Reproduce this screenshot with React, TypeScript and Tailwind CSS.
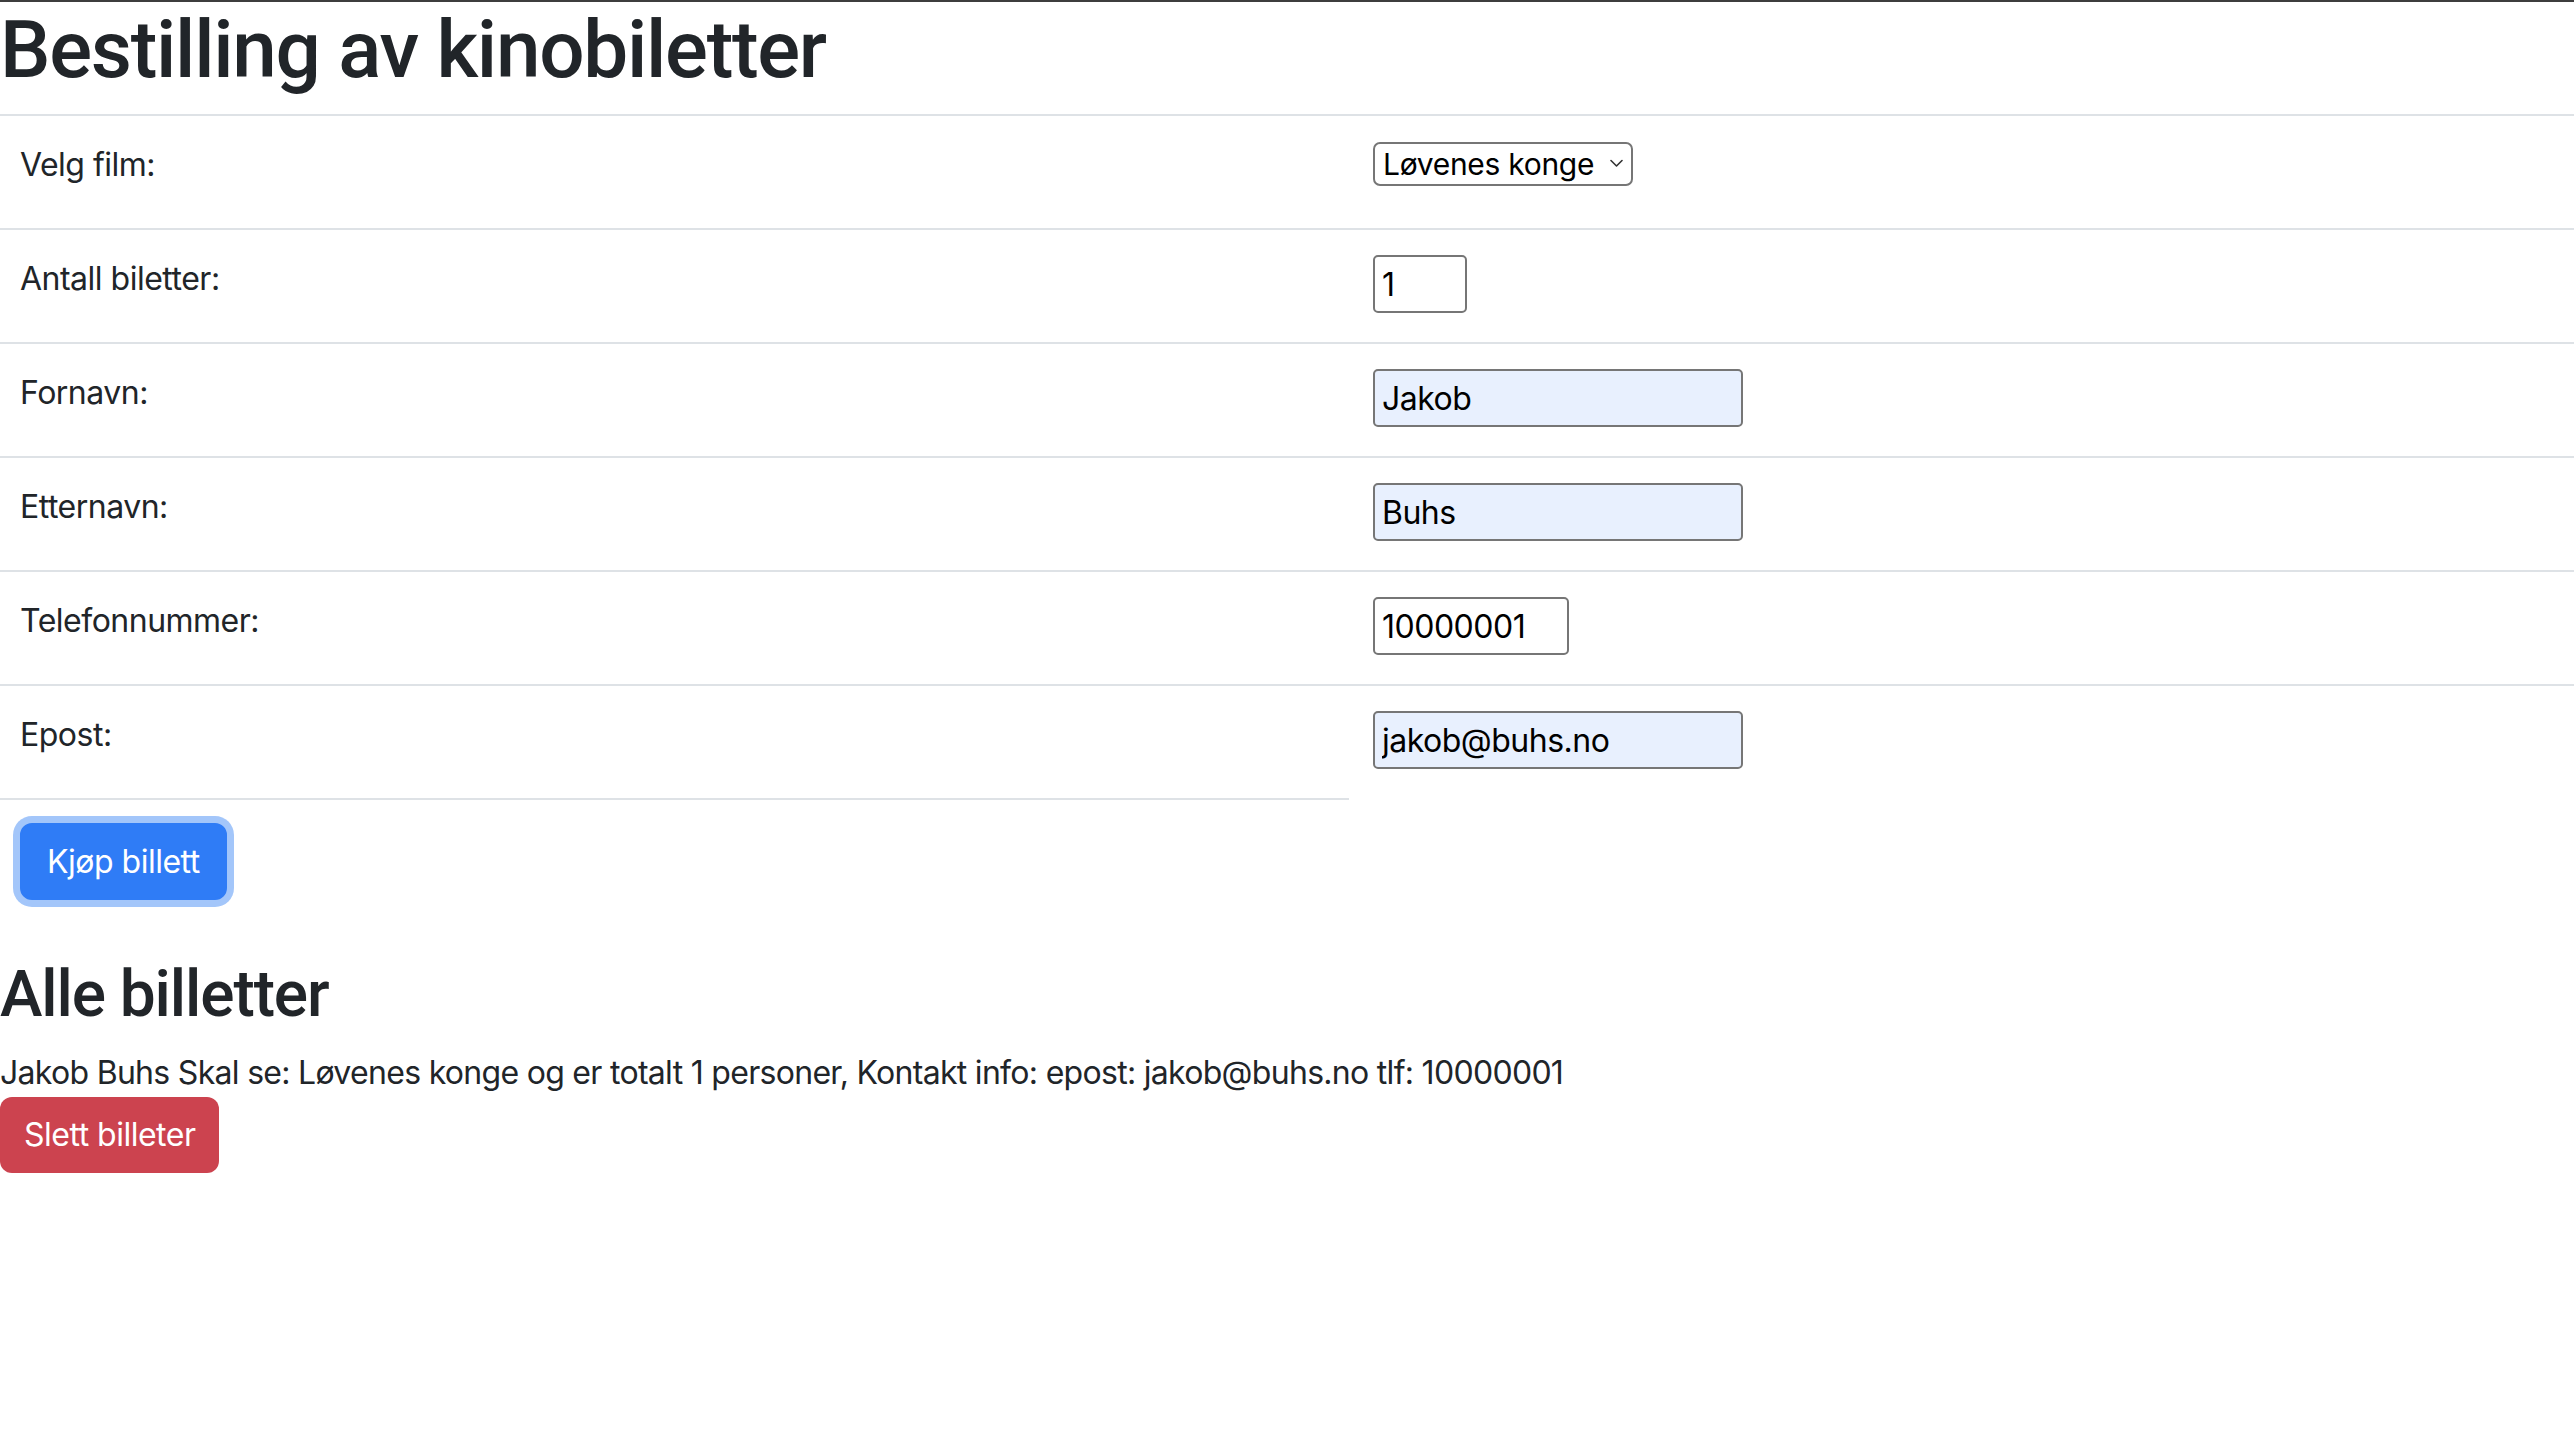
import React from 'react';

const rows = [
  { label: 'Velg film:', kind: 'select' },
  { label: 'Antall biletter:', kind: 'number', value: '1' },
  { label: 'Fornavn:', kind: 'text', value: 'Jakob' },
  { label: 'Etternavn:', kind: 'text', value: 'Buhs' },
  { label: 'Telefonnummer:', kind: 'tel', value: '10000001' },
  { label: 'Epost:', kind: 'email', value: 'jakob@buhs.no' },
];

const Field: React.FC<{ kind: string; value?: string }> = ({ kind, value }) => {
  if (kind === 'select') {
    return (
      <div className="relative mt-[26px] w-[260px] h-[44px]">
        <select
          defaultValue="lk"
          className="appearance-none w-full h-full border-2 border-[#767676] rounded-[7px] bg-white pl-[8px] text-[30px] leading-[40px] tracking-[-0.3px] text-black"
        >
          <option value="lk">Løvenes konge</option>
        </select>
        <svg className="absolute right-[10px] top-[17px] w-[13px] h-[9px] pointer-events-none" viewBox="0 0 13 9" fill="none" stroke="#333" strokeWidth={1.6} strokeLinecap="round" strokeLinejoin="round">
          <path d="M1 1.5l5.5 5.5 5.5-5.5" />
        </svg>
      </div>
    );
  }
  const width = kind === 'number' ? 'w-[94px]' : kind === 'tel' ? 'w-[196px]' : 'w-[370px]';
  const bg = kind === 'text' || kind === 'email' ? 'bg-[#e8f0fe]' : 'bg-white';
  return (
    <input
      type="text"
      defaultValue={value}
      className={`mt-[25px] ${width} ${bg} h-[58px] border-2 border-[#767676] rounded-[5px] px-[7px] text-[32px] tracking-[-0.5px] text-black outline-none`}
    />
  );
};

export default function App() {
  return (
    <div className="min-h-screen bg-white text-[#212529] font-['Inter',sans-serif] tracking-[-0.5px]">
      <div className="h-[2px] bg-[#3d3d3d]" />
      <h1 className="font-['Roboto',sans-serif] text-[80px] leading-[96px] font-medium tracking-[-1.3px] mb-[16px]">Bestilling av kinobiletter</h1>

      <div className="border-t-2 border-[#dee2e6]">
        {rows.map((r, i) => {
          const last = i === rows.length - 1;
          return (
            <div key={r.label} className={`flex h-[114px] ${last ? '' : 'border-b-2 border-[#dee2e6]'}`}>
              <div className={`w-[1349px] shrink-0 pl-[20px] pt-[25px] text-[32px] leading-[48px] ${last ? 'border-b-2 border-[#dee2e6]' : ''}`}>
                {r.label}
              </div>
              <div className="pl-[24px]">
                <Field kind={r.kind} value={r.value} />
              </div>
            </div>
          );
        })}
      </div>

      <div className="pl-[20px] pt-[23px]">
        <button className="h-[77px] px-[25px] rounded-[12px] bg-[#2f7cf6] border-2 border-[#2f7cf6] text-white text-[32px] leading-[48px] ring-[7px] ring-[#a3c6fa]">
          Kjøp billett
        </button>
      </div>

      <h2 className="font-['Roboto',sans-serif] mt-[56px] text-[64px] leading-[77px] font-medium tracking-[-1.1px] mb-[16px]">Alle billetter</h2>
      <p className="text-[32px] leading-[48px] tracking-[-0.7px]">
        Jakob Buhs Skal se: Løvenes konge og er totalt 1 personer, Kontakt info: epost: jakob@buhs.no tlf: 10000001
      </p>
      <button className="h-[76px] px-[24px] rounded-[12px] bg-[#cc434f] text-white text-[32px] leading-[48px]">
        Slett billeter
      </button>
    </div>
  );
}
